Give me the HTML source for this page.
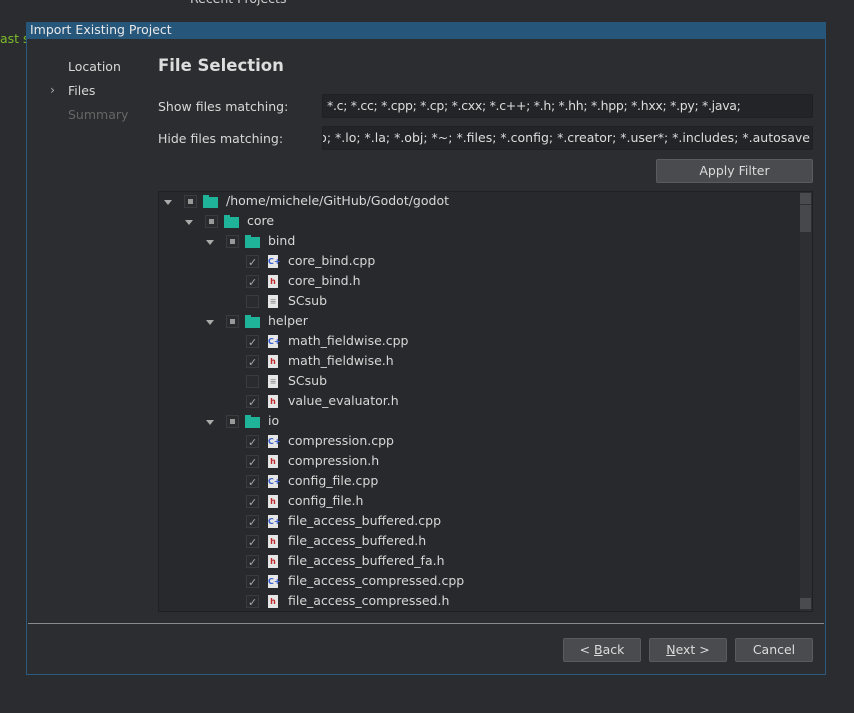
<!DOCTYPE html><html><head><style>
*{box-sizing:border-box}
body{margin:0;width:854px;height:713px;background:#2b2c2f;font-family:"DejaVu Sans","Liberation Sans",sans-serif;color:#d8d8d8;position:relative;overflow:hidden;font-size:12.5px}
.a{position:absolute}
.dlg{left:26px;top:22px;width:800px;height:653px;border:1px solid #2b5a80;background:#2c2d30}
.tb{left:26px;top:22px;width:800px;height:17px;background:#27567b;color:#e8e8e8;line-height:15px}
.inp{background:#232427;border:1px solid #1f2022;border-radius:2px;height:24px;line-height:22px;overflow:hidden;white-space:nowrap;color:#ddd}
.btn{background:#4a4b4e;border:1px solid #5a5b5e;border-radius:2px;color:#dcdcdc;text-align:center;height:24px;line-height:22px}
.tree{left:158px;top:191px;width:655px;height:421px;background:#28292c;border:1px solid #1f2022}
.r{position:absolute;height:20px;line-height:20px;white-space:nowrap}
.ar{position:absolute;width:0;height:0;border-left:4px solid transparent;border-right:4px solid transparent;border-top:5px solid #aaa;top:9px}
.cb{position:absolute;width:13px;height:13px;border:1px solid #3a3b3e;background:#2a2b2e;top:4px}
.cb.p::after{content:"";position:absolute;left:3px;top:3px;width:5px;height:5px;background:#999}
.cb.c::after{content:"✓";position:absolute;left:1px;top:-3px;font-size:11px;color:#aaa}
.fd{position:absolute;width:15px;height:11px;background:#1fb39a;top:6px}
.fd::before{content:"";position:absolute;left:0;top:-2px;width:6px;height:2px;background:#1fb39a}
.fi{position:absolute;width:10px;height:13px;background:#e6e6e6;top:4px;font-size:8px;line-height:13px;text-align:center;font-weight:bold}
</style></head><body>
<div class="a" style="left:190px;top:-9px;color:#ccc">Recent Projects</div>
<div class="a" style="left:0;top:31px;color:#7bbd2a">ast s</div>
<div class="a dlg"></div>
<div class="a tb">&nbsp;Import Existing Project</div>
<div class="a" style="left:68px;top:59px">Location</div>
<div class="a" style="left:50px;top:82px;color:#aaa">›</div>
<div class="a" style="left:68px;top:83px">Files</div>
<div class="a" style="left:68px;top:107px;color:#666">Summary</div>
<div class="a" style="left:158px;top:56px;font-size:16.5px;font-weight:bold;color:#ddd">File Selection</div>
<div class="a" style="left:158px;top:99px">Show files matching:</div>
<div class="a" style="left:158px;top:131px">Hide files matching:</div>
<div class="a inp" style="left:322px;top:94px;width:491px;padding-left:4px;letter-spacing:-0.3px">*.c; *.cc; *.cpp; *.cp; *.cxx; *.c++; *.h; *.hh; *.hpp; *.hxx; *.py; *.java;</div>
<div class="a inp" style="left:322px;top:126px;width:491px;padding-right:2px"><div style="position:absolute;right:2px;top:0">*.o; *.lo; *.la; *.obj; *~; *.files; *.config; *.creator; *.user*; *.includes; *.autosave</div></div>
<div class="a btn" style="left:656px;top:159px;width:157px">Apply Filter</div>
<div class="a tree">
<div class="a" style="right:0;top:0;width:12px;height:419px;background:#2e2f32"></div>
<div class="a" style="right:1px;top:1px;width:11px;height:11px;background:#4a4b4e"></div>
<div class="a" style="right:1px;top:13px;width:11px;height:27px;background:#47484b"></div>
<div class="a" style="right:1px;top:406px;width:11px;height:11px;background:#4a4b4e"></div>
</div>
<div id="t"></div>
<div class="a" style="left:28px;top:623px;width:796px;height:1px;background:#8a8a8a"></div>
<div class="a btn" style="left:563px;top:638px;width:78px">&lt; <u>B</u>ack</div>
<div class="a btn" style="left:649px;top:638px;width:78px"><u>N</u>ext &gt;</div>
<div class="a btn" style="left:735px;top:638px;width:78px">Cancel</div>
<script>
var rows=[[0,'d','/home/michele/GitHub/Godot/godot'],[1,'d','core'],[2,'d','bind'],[3,'c','core_bind.cpp'],[3,'h','core_bind.h'],[3,'s','SCsub'],[2,'d','helper'],[3,'c','math_fieldwise.cpp'],[3,'h','math_fieldwise.h'],[3,'s','SCsub'],[3,'h','value_evaluator.h'],[2,'d','io'],[3,'c','compression.cpp'],[3,'h','compression.h'],[3,'c','config_file.cpp'],[3,'h','config_file.h'],[3,'c','file_access_buffered.cpp'],[3,'h','file_access_buffered.h'],[3,'h','file_access_buffered_fa.h'],[3,'c','file_access_compressed.cpp'],[3,'h','file_access_compressed.h']];
var h='';rows.forEach(function(r,i){var l=r[0],y=191+i*20,x=168+l*21;h+='<div class="r" style="left:0;top:'+y+'px;width:800px">';
if(r[1]=='d'){h+='<div class="ar" style="left:'+(x-4)+'px"></div><div class="cb p" style="left:'+(x+16)+'px"></div><div class="fd" style="left:'+(x+35)+'px"></div><div class="a" style="left:'+(x+58)+'px">'+r[2]+'</div>';}
else{var cx=246;h+='<div class="cb '+(r[1]=='s'?'':'c')+'" style="left:'+cx+'px"></div>';
var ic=r[1]=='c'?'<span style="color:#3a5fd0">C+</span>':r[1]=='h'?'<span style="color:#c0282a">h</span>':'<span style="color:#999">≡</span>';
h+='<div class="fi" style="left:268px">'+ic+'</div><div class="a" style="left:288px">'+r[2]+'</div>';}
h+='</div>';});document.getElementById('t').innerHTML=h;
</script>
</body></html>
